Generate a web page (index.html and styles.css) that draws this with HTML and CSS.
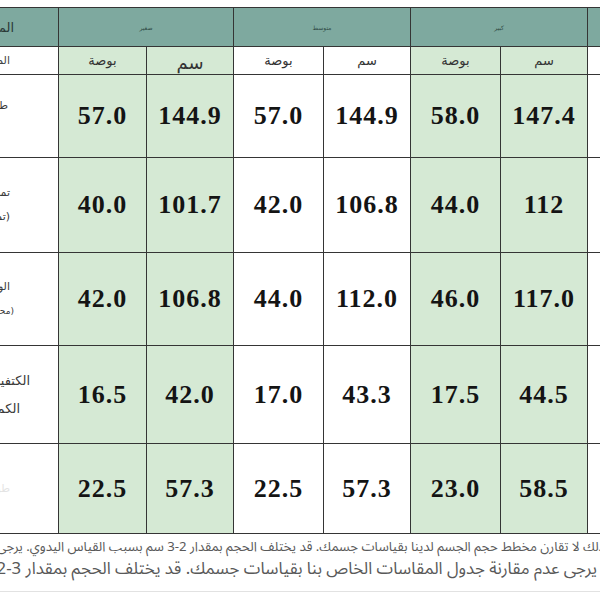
FILE: index.html
```html
<!DOCTYPE html>
<html lang="ar">
<head>
<meta charset="utf-8">
<link rel="stylesheet" href="styles.css">
</head>
<body>
<div class="frame">
  <table class="chart">
    <colgroup>
      <col class="c-label">
      <col class="c-a"><col class="c-b">
      <col class="c-c"><col class="c-b">
      <col class="c-c"><col class="c-b">
      <col class="c-last">
    </colgroup>
    <tr class="h1">
      <th class="lab"><span class="lab-t">المقاس</span></th>
      <th colspan="2" class="grp">صغير</th>
      <th colspan="2" class="grp">متوسط</th>
      <th colspan="2" class="grp">كبير</th>
      <th class="grp">كبير جداً</th>
    </tr>
    <tr class="h2">
      <th class="lab white"><span class="lab-s">المقاس</span></th>
      <th class="green unit">بوصة</th>
      <th class="green unit big">سم</th>
      <th class="white unit">بوصة</th>
      <th class="white unit">سم</th>
      <th class="green unit">بوصة</th>
      <th class="green unit">سم</th>
      <th class="white unit"></th>
    </tr>
    <tr class="r1">
      <td class="lab"><span class="lt top">طول الثوب</span></td>
      <td class="green num">57.0</td><td class="green num">144.9</td>
      <td class="num">57.0</td><td class="num">144.9</td>
      <td class="green num">58.0</td><td class="green num">147.4</td>
      <td></td>
    </tr>
    <tr class="r2">
      <td class="lab"><span class="lt">تمشيط الصدر</span><span class="lt">(تمثال نصفي)</span></td>
      <td class="green num">40.0</td><td class="green num">101.7</td>
      <td class="num">42.0</td><td class="num">106.8</td>
      <td class="green num">44.0</td><td class="green num">112</td>
      <td></td>
    </tr>
    <tr class="r3">
      <td class="lab"><span class="lt">الورك</span><span class="lt small">(محيط الورك)</span></td>
      <td class="green num">42.0</td><td class="green num">106.8</td>
      <td class="num">44.0</td><td class="num">112.0</td>
      <td class="green num">46.0</td><td class="green num">117.0</td>
      <td></td>
    </tr>
    <tr class="r4">
      <td class="lab"><span class="lt wide">الكتفين</span><span class="lt wide2">الكم</span></td>
      <td class="green num">16.5</td><td class="green num">42.0</td>
      <td class="num">17.0</td><td class="num">43.3</td>
      <td class="green num">17.5</td><td class="green num">44.5</td>
      <td></td>
    </tr>
    <tr class="r5">
      <td class="lab"><span class="lt faint">طول الكم</span></td>
      <td class="green num">22.5</td><td class="green num">57.3</td>
      <td class="num">22.5</td><td class="num">57.3</td>
      <td class="green num">23.0</td><td class="green num">58.5</td>
      <td></td>
    </tr>
  </table>
</div>
<p class="note note1">لذلك لا تقارن مخطط حجم الجسم لدينا بقياسات جسمك. قد يختلف الحجم بمقدار 2-3 سم بسبب القياس اليدوي. يرجى مراجعة الجدول</p>
<p class="note note2">يرجى عدم مقارنة جدول المقاسات الخاص بنا بقياسات جسمك. قد يختلف الحجم بمقدار 3-2 سم</p>
<div class="rule"></div>
</body>
</html>
```
FILE: styles.css
```css
html, body {
  margin: 0;
  padding: 0;
  background: #ffffff;
  width: 600px;
  overflow: hidden;
}
.frame {
  width: 600px;
  overflow: hidden;
  padding-top: 7px;
}
.chart {
  border-collapse: collapse;
  table-layout: fixed;
  width: 749px;
  margin-left: -102px;
  font-family: "DejaVu Sans", sans-serif;
}
.c-label { width: 160px; }
.c-a { width: 88px; }
.c-b { width: 87px; }
.c-c { width: 90px; }
.c-last { width: 60px; }
.chart th, .chart td {
  border: 1px solid #353535;
  padding: 0;
  text-align: center;
  vertical-align: middle;
}
.h1 { height: 39px; }
.h1 th {
  background: #7ea99f;
  font-weight: normal;
}
.grp {
  font-size: 6px;
  color: #2f4a45;
}
.lab-t {
  display: block;
  direction: rtl;
  text-align: right;
  padding-right: 44px;
  font-size: 13px;
  color: #2c3a38;
}
.h2 { height: 28px; }
.lab-s {
  display: block;
  direction: rtl;
  text-align: right;
  padding-right: 48px;
  font-size: 11px;
  color: #444;
  font-weight: normal;
}
.unit {
  font-weight: normal;
  font-size: 13px;
  color: #333;
  direction: rtl;
}
.unit.big { font-size: 18px; padding-top: 4px; }
.green { background: #d5e9d4; }
.white { background: #ffffff; }
.r1 { height: 83px; }
.r2 { height: 95px; }
.r3 { height: 93px; }
.r4 { height: 98px; }
.r5 { height: 90px; }
.num {
  font-family: "Liberation Serif", "Times New Roman", serif;
  font-weight: bold;
  font-size: 26px;
  letter-spacing: 1px;
  color: #141414;
}
.lab {
  direction: rtl;
}
.lt {
  display: block;
  text-align: right;
  padding-right: 48px;
  font-size: 11px;
  line-height: 24px;
  color: #3a3a3a;
  white-space: nowrap;
}
.lt.top { margin-bottom: 20px; padding-right: 50px; }
.lt.small { font-size: 9px; padding-right: 44px; }
.lt.wide { font-size: 13px; padding-right: 28px; line-height: 28px; }
.lt.wide2 { font-size: 13px; padding-right: 38px; line-height: 28px; }
.lt.faint { color: #e4e4e4; }
.note {
  margin: 0;
  direction: rtl;
  text-align: right;
  white-space: nowrap;
  overflow: hidden;
  font-family: "Noto Sans Arabic", "Noto Naskh Arabic", "DejaVu Sans", sans-serif;
  color: #595959;
}
.note1 {
  margin-top: 3px;
  font-size: 13.2px;
  line-height: 20px;
  text-indent: -9px;
}
.note2 {
  font-size: 16.8px;
  line-height: 24px;
  padding-right: 3px;
}
.rule {
  margin-top: 10px;
  height: 1px;
  background: #e2e2e2;
}
```
